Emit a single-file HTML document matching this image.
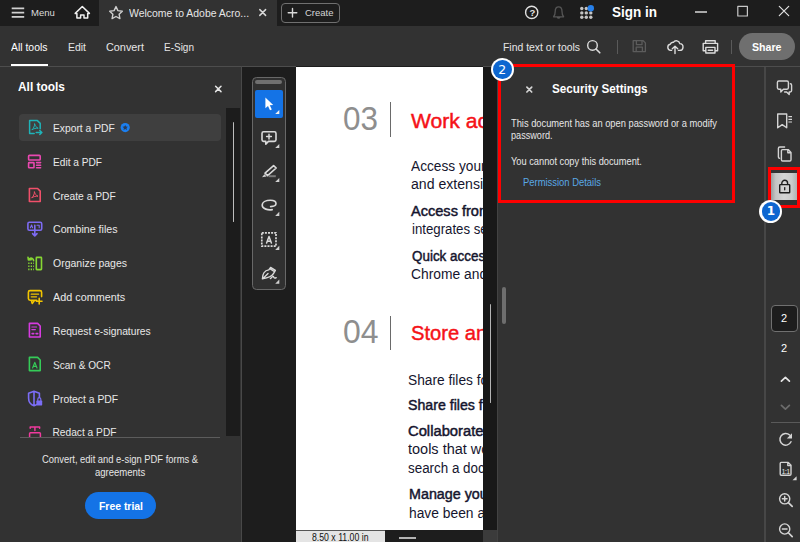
<!DOCTYPE html>
<html lang="en"><head><meta charset="utf-8"><title>Adobe Acrobat - Security Settings</title>
<style>
*{box-sizing:border-box;margin:0;padding:0}
html,body{width:800px;height:542px;overflow:hidden;background:#323232;font-family:"Liberation Sans",sans-serif;color:#e6e6e6}
body{position:relative}
.a{position:absolute}
.t{position:absolute;white-space:nowrap;transform-origin:0 50%}
svg{position:absolute;overflow:visible}
.s{fill:none;stroke:#dcdcdc;stroke-width:1.4;stroke-linecap:round;stroke-linejoin:round}
#titlebar{left:0;top:0;width:800px;height:26px;background:#1d1d1d}
#tab{left:99px;top:0;width:178px;height:26px;background:#323232}
#create{left:280.5px;top:2.5px;width:59.5px;height:20.5px;border:1px solid #707070;border-radius:4px}
#tbline{left:0;top:66px;width:800px;height:1px;background:#4d4d4d}
#tabul{left:11px;top:64px;width:37px;height:2px;background:#fff}
#share{left:739px;top:33px;width:56px;height:27px;border-radius:14px;background:#6f6f6f}
#left{left:0;top:67px;width:241px;height:475px;background:#323232;overflow:hidden}
#leftline{left:240.6px;top:66px;width:1.4px;height:476px;background:#484848}
#list{left:0;top:107px;width:226px;height:330px;overflow:hidden}
#list .t{margin-top:-107px}
#row{left:19px;top:114px;width:202px;height:27px;border-radius:4px;background:#3f3f3f}
#track{left:226px;top:107.5px;width:14px;height:328.5px;background:#1c1c1c}
#thumb{left:232.5px;top:122px;width:1.6px;height:100px;background:#bcbcbc;border-radius:1px}
#ldiv{left:20px;top:436.5px;width:200px;height:1px;background:#5c5c5c}
#trial{left:84.5px;top:492px;width:71px;height:27px;border-radius:14px;background:#1473e6}
#docarea{left:242px;top:67px;width:255px;height:475px;background:#1d1d1d}
#docline{left:296px;top:66px;width:187px;height:1px;background:#1d1d1d}
#toolbox{left:252.2px;top:76.7px;width:33.5px;height:213px;border:1.4px solid #686868;border-radius:4.5px;background:#303030}
#grip{left:255px;top:80px;width:27.4px;height:3.6px;border-radius:2px;background:#707070}
#sel{left:255px;top:90.4px;width:27.5px;height:27.4px;border-radius:2px;background:#1473e6}
#page{left:296px;top:67px;width:187px;height:463px;background:#fff;overflow:hidden}
#sizebox{left:296px;top:530px;width:89px;height:12px;background:#e4e4e4;border-top:1px solid #555}
#hthumb{left:399px;top:537px;width:16.5px;height:1.8px;background:#b4b4b4}
#strip{left:483px;top:67px;width:14px;height:463px;background:#181818}
#corner{left:483px;top:530px;width:14px;height:12px;background:#3b3b3b}
#vthumb{left:489.8px;top:304px;width:1.6px;height:99px;background:#b4b4b4;border-radius:1px}
#secline{left:497px;top:67px;width:1px;height:475px;background:#424242}
#secthumb{left:502px;top:286.5px;width:4px;height:37.5px;border-radius:2px;background:#6e6e6e}
#red1{left:498px;top:64px;width:237px;height:139px;border:3px solid #fe0000}
#red2{left:768px;top:167px;width:32.3px;height:41px;border:3px solid #fe0000}
#lockbtn{left:771px;top:173px;width:26.3px;height:27.2px;background:linear-gradient(90deg,#9c9c9c 0,#c4c4c4 18%,#d4d4d4 50%,#cacaca 80%,#b0b0b0 100%)}
#railline{left:764.2px;top:67px;width:1.4px;height:475px;background:#474747}
#pagebox{left:771px;top:305.3px;width:27px;height:26.5px;border:1px solid #707070;border-radius:4px;background:#1d1d1d}
#raildiv{left:770.7px;top:422px;width:30px;height:1px;background:#5a5a5a}
.badge{position:absolute;width:23.2px;height:23.2px;border-radius:50%;background:#fff}
.badge i{position:absolute;left:2.3px;top:2.3px;width:18.6px;height:18.6px;border-radius:50%;background:#0d66d0}
.badge b{position:absolute;left:0;top:0;width:23.2px;height:23.2px;line-height:23.2px;text-align:center;color:#fff;font-size:12.5px;font-weight:400;font-family:"DejaVu Sans","Liberation Sans",sans-serif}
.sep{position:absolute;width:1px;height:13.5px;top:40px;background:#5a5a5a}
</style></head>
<body>
<div class="a" id="titlebar"></div>
<div class="a" id="tab"></div>
<div class="a" id="create"></div>
<div class="a" id="tbline"></div>
<div class="a" id="tabul"></div>
<div class="a" id="share"></div>
<div class="sep" style="left:617px"></div>
<div class="sep" style="left:731.3px"></div>

<div class="a" id="left"></div>
<div class="a" id="leftline"></div>
<div class="a" id="row"></div>
<div class="a" id="track"></div>
<div class="a" id="thumb"></div>
<div class="a" id="list">
<svg class="a" style="left:0;top:-107px" width="241" height="542" viewBox="0 0 241 542"><g fill="none" stroke="#f03a9e" stroke-width="1.5" stroke-linecap="round" stroke-linejoin="round"><path d="M30.2 428.2V427H39.6V428.2M34.9 427.2V430.6"/><rect x="29.6" y="432.8" width="10.8" height="6" rx="0.8"/></g></svg>
<div class="t" style="left:52.5px;top:124px;font-size:10.2px;line-height:10.2px;color:#e8e8e8;transform:scaleX(1.009);">Export a PDF</div>
<div class="t" style="left:52.5px;top:158px;font-size:10.2px;line-height:10.2px;color:#e8e8e8;transform:scaleX(0.995);">Edit a PDF</div>
<div class="t" style="left:52.5px;top:192px;font-size:10.2px;line-height:10.2px;color:#e8e8e8;transform:scaleX(1.007);">Create a PDF</div>
<div class="t" style="left:52.5px;top:225px;font-size:10.2px;line-height:10.2px;color:#e8e8e8;transform:scaleX(1.045);">Combine files</div>
<div class="t" style="left:52.5px;top:259px;font-size:10.2px;line-height:10.2px;color:#e8e8e8;transform:scaleX(1.029);">Organize pages</div>
<div class="t" style="left:52.5px;top:293px;font-size:10.2px;line-height:10.2px;color:#e8e8e8;transform:scaleX(1.061);">Add comments</div>
<div class="t" style="left:52.5px;top:327px;font-size:10.2px;line-height:10.2px;color:#e8e8e8;transform:scaleX(1.009);">Request e-signatures</div>
<div class="t" style="left:52.5px;top:361px;font-size:10.2px;line-height:10.2px;color:#e8e8e8;transform:scaleX(0.989);">Scan &amp; OCR</div>
<div class="t" style="left:52.5px;top:395px;font-size:10.2px;line-height:10.2px;color:#e8e8e8;transform:scaleX(1.019);">Protect a PDF</div>
<div class="t" style="left:52.5px;top:428px;font-size:10.2px;line-height:10.2px;color:#e8e8e8;">Redact a PDF</div>
</div>
<div class="a" id="ldiv"></div>
<div class="a" id="trial"></div>

<div class="a" id="docarea"></div>
<div class="a" id="docline"></div>
<div class="a" id="toolbox"></div>
<div class="a" id="grip"></div>
<div class="a" id="sel"></div>
<div class="a" id="page">
<div class="a" style="left:94.2px;top:35px;width:1.3px;height:35px;background:#6a6a6a"></div>
<div class="a" style="left:94.2px;top:248.7px;width:1.3px;height:34.5px;background:#6a6a6a"></div>
<div class="t" style="left:47.0px;top:36px;font-size:32.5px;line-height:32.5px;color:#8e8e8e;transform:scaleX(0.968);">03</div>
<div class="t" style="left:115.2px;top:44px;font-size:20.5px;line-height:20.5px;color:#f51218;transform:scaleX(1.030);-webkit-text-stroke:0.45px #f51218;">Work ac</div>
<div class="t" style="left:115.0px;top:92px;font-size:14px;line-height:14px;color:#15152e;transform:scaleX(0.979);">Access your</div>
<div class="t" style="left:115.2px;top:110px;font-size:14px;line-height:14px;color:#15152e;transform:scaleX(1.007);">and extensi</div>
<div class="t" style="left:115.0px;top:137px;font-size:14px;line-height:14px;color:#15152e;transform:scaleX(1.040);-webkit-text-stroke:0.45px #15152e;">Access from</div>
<div class="t" style="left:115.5px;top:155px;font-size:14px;line-height:14px;color:#15152e;transform:scaleX(0.944);">integrates se</div>
<div class="t" style="left:115.5px;top:182px;font-size:14px;line-height:14px;color:#15152e;transform:scaleX(0.959);-webkit-text-stroke:0.45px #15152e;">Quick access</div>
<div class="t" style="left:115.2px;top:200px;font-size:14px;line-height:14px;color:#15152e;transform:scaleX(0.988);">Chrome and</div>
<div class="t" style="left:47.0px;top:249px;font-size:32.5px;line-height:32.5px;color:#8e8e8e;transform:scaleX(0.982);">04</div>
<div class="t" style="left:115.2px;top:256px;font-size:20.5px;line-height:20.5px;color:#f51218;transform:scaleX(0.983);-webkit-text-stroke:0.45px #f51218;">Store and</div>
<div class="t" style="left:112.2px;top:306px;font-size:14px;line-height:14px;color:#15152e;transform:scaleX(0.981);">Share files for</div>
<div class="t" style="left:112.2px;top:331px;font-size:14px;line-height:14px;color:#15152e;transform:scaleX(1.011);-webkit-text-stroke:0.45px #15152e;">Share files f</div>
<div class="t" style="left:112.4px;top:357px;font-size:14px;line-height:14px;color:#15152e;transform:scaleX(1.054);-webkit-text-stroke:0.45px #15152e;">Collaborate</div>
<div class="t" style="left:112.4px;top:375px;font-size:14px;line-height:14px;color:#15152e;transform:scaleX(1.035);">tools that wo</div>
<div class="t" style="left:112.4px;top:394px;font-size:14px;line-height:14px;color:#15152e;transform:scaleX(0.957);">search a doc</div>
<div class="t" style="left:112.7px;top:420px;font-size:14px;line-height:14px;color:#15152e;transform:scaleX(1.022);-webkit-text-stroke:0.45px #15152e;">Manage you</div>
<div class="t" style="left:112.7px;top:439px;font-size:14px;line-height:14px;color:#15152e;transform:scaleX(0.987);">have been a</div>
</div>
<div class="a" id="sizebox"></div>
<div class="a" id="hthumb"></div>
<div class="a" id="strip"></div>
<div class="a" id="corner"></div>
<div class="a" id="vthumb"></div>
<div class="a" id="secline"></div>
<div class="a" id="secthumb"></div>
<div class="a" id="railline"></div>
<div class="a" id="pagebox"></div>
<div class="a" id="raildiv"></div>
<div class="a" id="lockbtn"></div>

<svg class="a" style="left:0;top:0" width="800" height="542" viewBox="0 0 800 542">
<g fill="none" stroke="#d8d8d8" stroke-width="1.4" stroke-linecap="round" stroke-linejoin="round">
<!-- hamburger -->
<g stroke="#d0d0d0" stroke-width="1.7" stroke-linecap="butt"><path d="M11.7 8.4H24.2M11.7 12.6H24.2M11.7 16.8H24.2"/></g>
<!-- home -->
<path stroke="#f0f0f0" stroke-width="1.5" d="M82.3 6.5 75.2 13.4H76.9V18.1H80.6V14.9H84V18.1H87.7V13.4H89.4Z"/>
<!-- star -->
<path stroke="#cfcfcf" stroke-width="1.4" d="M116 6.6 117.9 10.6 122.3 11.2 119.1 14.2 119.9 18.6 116 16.5 112.1 18.6 112.9 14.2 109.7 11.2 114.1 10.6Z"/>
<!-- tab close -->
<path stroke="#d8d8d8" stroke-width="1.5" d="M259.8 9.6 265.6 15.4M265.6 9.6 259.8 15.4"/>
<!-- plus -->
<path stroke="#d8d8d8" stroke-width="1.4" d="M288.2 12.7H296.8M292.5 8.4V17"/>
<!-- help -->
<circle cx="531.7" cy="12.4" r="6.1" stroke="#e0e0e0" stroke-width="1.4"/>
<!-- bell -->
<path stroke="#565656" stroke-width="1.3" d="M553.6 16.8H563.6C562.4 15.6 562 14.2 562 11.6 562 8.6 560.6 6.8 558.6 6.8 556.6 6.8 555.2 8.6 555.2 11.6 555.2 14.2 554.8 15.6 553.6 16.8ZM557.3 17.2A1.4 1.4 0 0 0 559.9 17.2"/>
<!-- window controls -->
<path stroke="#d8d8d8" stroke-width="1.5" stroke-linecap="butt" d="M695 12H707"/>
<rect x="737.8" y="6.4" width="9.6" height="9.6" stroke="#c8c8c8" stroke-width="1.2"/>
<path stroke="#e0e0e0" stroke-width="1.2" d="M779.3 6.3 788.7 15.7M788.7 6.3 779.3 15.7"/>
<!-- search -->
<circle cx="592.5" cy="45.4" r="4.8" stroke="#dcdcdc" stroke-width="1.4"/>
<path stroke="#dcdcdc" stroke-width="1.6" d="M596 49 599.8 52.8"/>
<!-- save (disabled) -->
<path stroke="#5c5c5c" stroke-width="1.3" d="M633.2 40.7H643.2L645.4 42.9V51.6H633.2ZM636.4 40.9V44.6H642V40.9M636.2 51.4V47.2H642.4V51.4"/>
<!-- cloud upload -->
<path stroke="#dcdcdc" stroke-width="1.4" d="M671.6 50.4H670.6A3.1 3.1 0 0 1 670.2 44.3 3 3 0 0 1 673.4 42.3 3.6 3.6 0 0 1 679.8 43.6 3.4 3.4 0 0 1 679.4 50.4H678.4M675 53.6V46.4M672.3 48.8 675 46.2 677.7 48.8"/>
<!-- print -->
<path stroke="#dcdcdc" stroke-width="1.4" d="M705.6 43.2V40.7H715.2V43.2M705.8 50.8H703.2V43.4H717.6V50.8H715M705.8 47.4H715V53H705.8ZM708.2 50.2H712.6"/>
</g>
<!-- apps -->
<g fill="#c4c4c4"><circle cx="581.8" cy="8.5" r="1.7"/><circle cx="586.3" cy="8.5" r="1.7"/>
<circle cx="581.8" cy="12.9" r="1.7"/><circle cx="586.3" cy="12.9" r="1.7"/><circle cx="590.8" cy="12.9" r="1.7"/>
<circle cx="581.8" cy="17.3" r="1.7"/><circle cx="586.3" cy="17.3" r="1.7"/><circle cx="590.8" cy="17.3" r="1.7"/></g>
<circle cx="590.8" cy="8.2" r="3.2" fill="#2680eb"/>

<!-- left panel close -->
<path fill="none" stroke="#e6e6e6" stroke-width="1.5" stroke-linecap="round" d="M215.6 86.2 221 91.6M221 86.2 215.6 91.6"/>
<!-- export badge -->
<circle cx="125.2" cy="127.6" r="4.6" fill="#1b7ff0"/>
<path fill="#2a3a55" d="M125.2 124.9 126 126.6 127.9 126.8 126.5 128.1 126.9 130 125.2 129.1 123.5 130 123.9 128.1 122.5 126.8 124.4 126.6Z"/>
<g fill="none" stroke-width="1.5" stroke-linecap="round" stroke-linejoin="round">
<!-- export -->
<g stroke="#1fb3b8"><path d="M34.2 133.6H29.6V120.6H37.4L40.2 123.4V128.8M36.2 132.5H41.6M39.8 130.5 41.9 132.5 39.8 134.5"/>
<path stroke-width="1" d="M32.2 129.6C33.6 128.4 34.8 125.8 34.6 123.6 35 125.8 36.4 127.6 38.2 128.2 36 128 33.8 128.6 32.2 129.6Z"/></g>
<!-- edit -->
<g stroke="#ea48b0" stroke-width="1.6"><rect x="28.6" y="155.4" width="11.6" height="4.6" rx="0.8"/><rect x="28.6" y="162.6" width="5.4" height="5.2" rx="0.6"/><path d="M36.6 162.6H40.6M36.6 165.2H40.6M36.6 167.8H40.6"/></g>
<!-- create -->
<g stroke="#f0506a"><path stroke-width="1.6" d="M29.4 188.5H37.6L40.2 191.1V201.5H29.4Z"/>
<path stroke-width="1" d="M32 197.6C33.4 196.4 34.6 193.8 34.4 191.6 34.8 193.8 36.2 195.6 38 196.2 35.8 196 33.6 196.6 32 197.6Z"/></g>
<!-- combine -->
<g stroke="#7d6bf2" stroke-width="1.6"><rect x="27.9" y="222.3" width="13.8" height="7.9" rx="1.4"/><path d="M34.8 225.4V235.4M32.6 233.6 34.8 236 37 233.6"/><path stroke-width="1.1" d="M30.4 227.8 31.6 225 32.6 227.8M37 225.2H39.2V227.8"/></g>
<!-- organize -->
<g stroke="#86d633" stroke-width="1.6"><rect x="36.3" y="257.4" width="5.2" height="12.2" rx="0.5"/><path stroke-dasharray="1.3 1.2" stroke-linecap="butt" d="M28.2 263.2H34M28.2 266.2H34M28.2 269.4H34"/><path d="M33.6 260.8C33.6 258.6 31.4 257.4 29.4 258.8M28 257.2 28.4 260 31.2 259.8"/></g>
<!-- add comments -->
<g stroke="#f2c500" stroke-width="1.6"><path d="M36.6 300.2H30C29 300.2 28.4 299.6 28.4 298.6V292.2C28.4 291.2 29 290.6 30 290.6H40C41 290.6 41.6 291.2 41.6 292.2V296.6M31.4 300.6 32.2 303.4 34.4 300.6M39.2 298.4V304M36.4 301.2H42"/><path stroke-width="1.2" d="M31.2 294.2H38.6M31.2 296.8H36.6"/></g>
<!-- request e-sign -->
<g stroke="#d63be0" stroke-width="1.6"><path d="M29.4 323.4H37.6L40.2 326V337H29.4Z"/><path stroke-width="1.1" d="M31.8 327H36.6M31.8 329.6H35.4"/><path stroke-width="1.8" d="M32.2 333.6H33.6M36.2 333.6H37.6"/></g>
<!-- scan -->
<g stroke="#35cb58" stroke-width="1.6"><path d="M29.4 357.4H37.6L40.2 360V370.6H29.4Z"/><path stroke-width="1.2" d="M32.6 368 34.8 362.4 37 368M33.4 366.4H36.2"/></g>
<!-- protect -->
<g stroke="#7b6df6" stroke-width="1.6"><path d="M36.4 404.6C35.6 405.2 34.8 405.6 34 405.8 30.6 404.6 28.6 401.8 28.6 398.2V393.2L34 391.2 39.4 393.2V397.4M34 391.4V405.4"/><path stroke-width="1.2" d="M37.8 400.4V399.2A1.5 1.5 0 0 1 40.8 399.2V400.4"/><rect x="36.4" y="400.6" width="5.8" height="4.8" rx="0.6" fill="#7b6df6" stroke="none"/></g>
</g>

<!-- toolbox -->
<path fill="#fff" d="M265.4 97.6V108.2L268 106 270 110.2 271.8 109.4 269.8 105.3 273.2 105Z"/>
<g fill="#f0f0f0"><path d="M279.3 110V114.1H275.2Z"/></g>
<g fill="#d0d0d0"><path d="M279.3 144V148.1H275.2Z"/><path d="M279.3 178V182.1H275.2Z"/><path d="M279.3 211.8V215.9H275.2Z"/><path d="M279.3 245.8V249.9H275.2Z"/><path d="M279.3 279.6V283.7H275.2Z"/></g>
<g fill="none" stroke="#dadada" stroke-width="1.6" stroke-linecap="round" stroke-linejoin="round">
<path d="M263.6 131.8H274.4C275.4 131.8 276 132.4 276 133.4V139.8C276 140.8 275.4 141.4 274.4 141.4H268.4L265.8 144.2V141.4H263.6C262.6 141.4 262 140.8 262 139.8V133.4C262 132.4 262.6 131.8 263.6 131.8Z"/>
<path stroke-width="1.5" d="M269 134.2V139M266.6 136.6H271.4"/>
<!-- pen -->
<path d="M273.6 165.6 276.2 168 267.6 175.6 265 173.2Z"/>
<path fill="#d2d2d2" stroke="none" d="M264.4 174.2 266.6 176.6 262 177.2Z"/>
<path stroke="#7a7a7a" stroke-width="2" stroke-linecap="butt" d="M268.6 176.2H275.8"/>
<!-- loop -->
<path d="M272.2 209.6C268.4 210.4 262.2 209 262.2 205.2 262.2 201.6 266.6 200.2 270.4 200.2 273.8 200.2 276 201.6 276 203.6 276 205.4 273.6 206.6 270.6 206.6"/>
<!-- text box -->
<rect x="261.8" y="232.8" width="14.2" height="13.4" stroke-width="1.7" stroke-dasharray="2 1.1" stroke-linecap="butt"/>
<path stroke-width="1.5" d="M266.6 243 269 236.4 271.4 243M267.4 241.2H270.6"/>
<!-- sign pen -->
<path stroke-width="1.35" d="M270.6 267.4 275.4 270.4 273.6 273.4C272.4 275.6 269 277.8 262.4 278.8 262.4 274.6 264.4 270.4 268.8 269.8ZM263 278.4 268 273.4M269.8 268.6 274.6 271.8M270.4 278.6C272 277.2 273.2 275.6 273.6 276.8 273.8 277.6 274.8 278.6 276.2 277.6"/>
</g>
<!-- rail -->
<g fill="none" stroke="#d4d4d4" stroke-width="1.4" stroke-linecap="round" stroke-linejoin="round">
<path d="M778.8 81H787C787.8 81 788.4 81.6 788.4 82.4V87.8C788.4 88.6 787.8 89.2 787 89.2H783.4L780.8 92V89.2H778.8C778 89.2 777.4 88.6 777.4 87.8V82.4C777.4 81.6 778 81 778.8 81Z"/>
<path d="M790.4 83.8C791.2 83.8 791.6 84.4 791.6 85.2V90.6C791.6 91.4 791 92 790.2 92H789.2V94.6L786.6 92H784.6"/>
<path d="M777.7 114H786.7V127.8L782.2 124.6 777.7 127.8Z"/>
<path stroke-width="1.2" stroke-linecap="butt" d="M788.4 116.6H792M788.4 119.3H792M788.4 122H792"/>
<path d="M779.6 158.2C778.8 158.2 778.4 157.6 778.4 157V148.4C778.4 147.6 779 147 779.8 147H784.6"/>
<path d="M782.6 149.6H788.2L791 152.4V159.8C791 160.6 790.4 161 789.8 161H782.6C781.8 161 781.4 160.4 781.4 159.8V150.8C781.4 150 782 149.6 782.6 149.6ZM787.8 150V152.8H790.6"/>
<!-- chevrons -->
<path stroke="#e6e6e6" stroke-width="1.7" d="M781.4 381.2 785.4 377.4 789.4 381.2"/>
<path stroke="#6c6c6c" stroke-width="1.7" d="M781.4 405.4 785.4 409.2 789.4 405.4"/>
<!-- rotate -->
<path stroke-width="1.5" d="M791 441.8A5.8 5.8 0 1 1 789.6 435"/>
<path fill="#d4d4d4" stroke="none" d="M792 433.2V438.4H786.8Z"/>
<!-- fit page -->
<path d="M781.2 462.4H788.2L791 465.2V474C791 474.8 790.4 475.2 789.8 475.2H781.2C780.4 475.2 780.2 474.6 780.2 474V463.4C780.2 462.8 780.6 462.4 781.2 462.4ZM787.8 462.8V465.6H790.6"/>
<!-- zoom in -->
<circle cx="784.7" cy="498.8" r="5.1"/><path stroke-width="1.7" d="M788.6 502.8 792.2 506.4"/><path stroke-width="1.5" d="M782.4 498.8H787M784.7 496.5V501.1"/>
<circle cx="784.7" cy="529" r="5.1"/><path stroke-width="1.7" d="M788.6 533 792.2 536.6"/><path stroke-width="1.5" d="M782.4 529H787"/>
</g>
<path fill="#d4d4d4" d="M796.6 476.2V480.3H792.5Z"/>
<!-- lock -->
<g fill="none" stroke="#1e1e1e" stroke-width="1.4" stroke-linejoin="round"><rect x="779.7" y="184.6" width="10" height="8.2" rx="0.6"/><path d="M781.8 184.4V183.2A2.9 2.9 0 0 1 787.6 183.2V184.4"/><path stroke-width="1.3" stroke-linecap="round" d="M784.7 187.6V189.8"/></g>
<path fill="none" stroke="#d4d4d4" stroke-width="1.7" stroke-linecap="round" d="M526.9 87.2 531.7 92M531.7 87.2 526.9 92"/>
<!--MORE-->
</svg>


<div class="t" style="left:30.7px;top:8px;font-size:9.8px;line-height:9.8px;color:#dcdcdc;transform:scaleX(0.971);">Menu</div>
<div class="t" style="left:129.2px;top:8px;font-size:11.2px;line-height:11.2px;color:#e6e6e6;transform:scaleX(0.934);">Welcome to Adobe Acro...</div>
<div class="t" style="left:305.0px;top:8px;font-size:9.8px;line-height:9.8px;color:#d6d6d6;transform:scaleX(0.969);">Create</div>
<div class="t" style="left:612.0px;top:5px;font-size:14px;line-height:14px;color:#ffffff;font-weight:700;transform:scaleX(0.964);">Sign in</div>
<div class="t" style="left:11.3px;top:42px;font-size:11px;line-height:11px;color:#ffffff;transform:scaleX(0.947);">All tools</div>
<div class="t" style="left:68.0px;top:42px;font-size:11px;line-height:11px;color:#e6e6e6;transform:scaleX(0.949);">Edit</div>
<div class="t" style="left:105.5px;top:42px;font-size:11px;line-height:11px;color:#e6e6e6;transform:scaleX(0.986);">Convert</div>
<div class="t" style="left:163.5px;top:42px;font-size:11px;line-height:11px;color:#e6e6e6;transform:scaleX(0.908);">E-Sign</div>
<div class="t" style="left:502.5px;top:42px;font-size:11px;line-height:11px;color:#e6e6e6;transform:scaleX(0.947);">Find text or tools</div>
<div class="t" style="left:752.2px;top:42px;font-size:11px;line-height:11px;color:#ffffff;font-weight:700;transform:scaleX(0.965);">Share</div>
<div class="t" style="left:18.4px;top:81px;font-size:12.6px;line-height:12.6px;color:#ffffff;font-weight:700;transform:scaleX(0.946);">All tools</div>
<div class="t" style="left:42.0px;top:455px;font-size:10px;line-height:10px;color:#e6e6e6;transform:scaleX(0.939);">Convert, edit and e-sign PDF forms &amp;</div>
<div class="t" style="left:94.5px;top:468px;font-size:10px;line-height:10px;color:#e6e6e6;transform:scaleX(0.952);">agreements</div>
<div class="t" style="left:98.6px;top:501px;font-size:10.8px;line-height:10.8px;color:#ffffff;font-weight:700;transform:scaleX(0.965);">Free trial</div>
<div class="t" style="left:552.0px;top:83px;font-size:12.5px;line-height:12.5px;color:#ffffff;font-weight:700;transform:scaleX(0.936);">Security Settings</div>
<div class="t" style="left:511.0px;top:119px;font-size:10px;line-height:10px;color:#e6e6e6;transform:scaleX(0.931);">This document has an open password or a modify</div>
<div class="t" style="left:511.0px;top:131px;font-size:10px;line-height:10px;color:#e6e6e6;transform:scaleX(0.911);">password.</div>
<div class="t" style="left:511.0px;top:157px;font-size:10px;line-height:10px;color:#e6e6e6;transform:scaleX(0.926);">You cannot copy this document.</div>
<div class="t" style="left:522.5px;top:178px;font-size:10px;line-height:10px;color:#5aa9e6;transform:scaleX(0.942);">Permission Details</div>
<div class="t" style="left:781.0px;top:313px;font-size:11px;line-height:11px;color:#ffffff;">2</div>
<div class="t" style="left:781.0px;top:343px;font-size:11px;line-height:11px;color:#ffffff;">2</div>
<div class="t" style="left:312.3px;top:533px;font-size:10px;line-height:10px;color:#111111;transform:scaleX(0.871);">8.50 x 11.00 in</div>
<div class="t" style="left:529.6px;top:8px;font-size:9.5px;line-height:9.5px;color:#e6e6e6;font-weight:700;">?</div>
<div class="t" style="left:781.7px;top:468px;font-size:7px;line-height:7px;color:#d4d4d4;font-weight:700;transform:scaleX(0.751);">1:1</div>

<div class="a" id="red1"></div>
<div class="a" id="red2"></div>
<div class="badge" style="left:490.7px;top:57.7px"><i></i><b>2</b></div>
<div class="badge" style="left:759.3px;top:199.9px"><i></i><b style="font-weight:700;font-size:12px">1</b></div>
</body></html>
